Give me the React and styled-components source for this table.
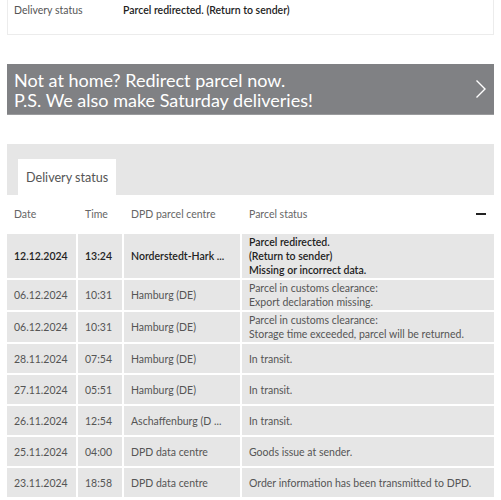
import React from "react";
import styled, { createGlobalStyle } from "styled-components";

const Global = createGlobalStyle`
  html, body { margin: 0; padding: 0; background: #fff; }
  body { font-family: Lato, "Open Sans", sans-serif; color: #555; }
`;

const Page = styled.div`
  padding: 0 7px;
  display: flex;
  flex-direction: column;
`;

const InfoCard = styled.div`
  border: 1px solid #ececec;
  border-top: none;
  display: grid;
  grid-template-columns: 109px 1fr;
  padding: 0 6px 14px;
  font-size: 10.5px;
  line-height: 20px;
`;

const InfoLabel = styled.div`
  color: #555;
`;

const InfoValue = styled.div`
  color: #222;
  font-weight: 600;
`;

const Banner = styled.a`
  margin-top: 29px;
  height: 51px;
  background: #808184;
  border-bottom: 1px solid #9a9b9d;
  box-sizing: border-box;
  display: flex;
  align-items: center;
  justify-content: space-between;
  padding: 0 7px 0 7px;
  color: #fff;
  text-decoration: none;
`;

const BannerText = styled.div`
  font-size: 18px;
  line-height: 20px;
  font-weight: 400;
  padding-top: 1px;
`;

const Section = styled.div`
  margin-top: 29px;
  background: #e6e6e6;
  padding-top: 15px;
`;

const Tabs = styled.div`
  display: flex;
  padding-left: 11px;
`;

const Tab = styled.div`
  background: #fff;
  width: 98px;
  height: 36px;
  box-sizing: border-box;
  padding-left: 8px;
  display: flex;
  align-items: center;
  font-size: 12.6px;
  color: #555;
`;

const Table = styled.div`
  display: grid;
  grid-template-columns: 69px 44px 116px 1fr;
  gap: 2px;
  background: #fff;
  font-size: 10.5px;
`;

const Cell = styled.div`
  background: ${(p) => (p.$head ? "#fff" : "#e6e6e6")};
  min-height: ${(p) => (p.$head ? "37px" : "29px")};
  box-sizing: border-box;
  padding: 1px 7px;
  display: flex;
  flex-direction: column;
  justify-content: center;
  line-height: 14px;
  color: ${(p) => (p.$head ? "#666" : p.$bold ? "#222" : "#555")};
  font-weight: ${(p) => (p.$bold ? 600 : 400)};
  white-space: nowrap;
`;

const HeadLast = styled(Cell)`
  flex-direction: row;
  align-items: center;
  justify-content: space-between;
  padding-right: 8px;
`;

const Minus = styled.span`
  display: block;
  width: 10px;
  height: 2px;
  background: #222;
`;

const rows = [
  ["12.12.2024", "13:24", "Norderstedt-Hark ...", ["Parcel redirected.", "(Return to sender)", "Missing or incorrect data."], true],
  ["06.12.2024", "10:31", "Hamburg (DE)", ["Parcel in customs clearance:", "Export declaration missing."]],
  ["06.12.2024", "10:31", "Hamburg (DE)", ["Parcel in customs clearance:", "Storage time exceeded, parcel will be returned."]],
  ["28.11.2024", "07:54", "Hamburg (DE)", ["In transit."]],
  ["27.11.2024", "05:51", "Hamburg (DE)", ["In transit."]],
  ["26.11.2024", "12:54", "Aschaffenburg (D ...", ["In transit."]],
  ["25.11.2024", "04:00", "DPD data centre", ["Goods issue at sender."]],
  ["23.11.2024", "18:58", "DPD data centre", ["Order information has been transmitted to DPD."]],
];

export default function App() {
  return (
    <>
      <Global />
      <Page>
        <InfoCard>
          <InfoLabel>Delivery status</InfoLabel>
          <InfoValue>Parcel redirected. (Return to sender)</InfoValue>
        </InfoCard>
        <Banner href="#">
          <BannerText>
            Not at home? Redirect parcel now.
            <br />
            P.S. We also make Saturday deliveries!
          </BannerText>
          <svg width="12" height="20" viewBox="0 0 12 20" fill="none">
            <polyline points="1.5,1.5 10,10 1.5,18.5" stroke="#fff" strokeWidth="1.4" />
          </svg>
        </Banner>
        <Section>
          <Tabs>
            <Tab>Delivery status</Tab>
          </Tabs>
          <Table>
            <Cell $head>Date</Cell>
            <Cell $head>Time</Cell>
            <Cell $head>DPD parcel centre</Cell>
            <HeadLast $head>
              <span>Parcel status</span>
              <Minus />
            </HeadLast>
            {rows.map((r, i) => (
              <React.Fragment key={i}>
                <Cell $bold={r[4]}>{r[0]}</Cell>
                <Cell $bold={r[4]}>{r[1]}</Cell>
                <Cell $bold={r[4]}>{r[2]}</Cell>
                <Cell $bold={r[4]}>
                  {r[3].map((l, j) => (
                    <div key={j}>{l}</div>
                  ))}
                </Cell>
              </React.Fragment>
            ))}
          </Table>
        </Section>
      </Page>
    </>
  );
}
